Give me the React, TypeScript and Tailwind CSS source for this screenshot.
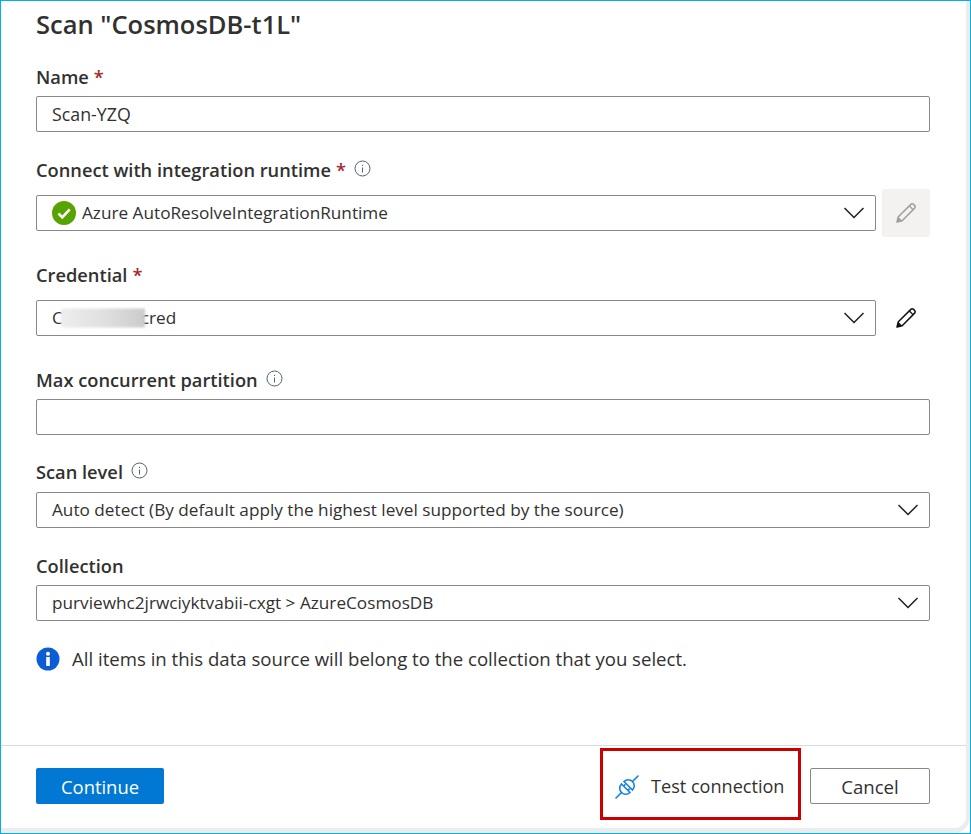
import type { ReactNode } from "react";

const font = { fontFamily: '"Open Sans", "Noto Sans", sans-serif' };

function InfoIcon() {
  return (
    <svg width="17" height="17" viewBox="0 0 17 17" fill="none" className="shrink-0">
      <circle cx="8.5" cy="8.5" r="7.5" stroke="#52606d" strokeWidth="1" />
      <rect x="8" y="7.5" width="1" height="5" fill="#52606d" />
      <rect x="8" y="4.8" width="1" height="1.2" fill="#52606d" />
    </svg>
  );
}

function Chevron() {
  return (
    <svg width="20" height="12" viewBox="0 0 20 12" fill="none" className="shrink-0">
      <path d="M0.5 1l9.500 9.500L19.500 1" stroke="#201f1e" strokeWidth="1.5" />
    </svg>
  );
}

function Pencil({ color }: { color: string }) {
  return (
    <svg width="22" height="22" viewBox="0 0 22 22" fill="none">
      <path
        d="M2 20l1.3-5.2L15.6 2.6c.9-.9 2.3-.9 3.2 0l.6.6c.9.9.9 2.3 0 3.2L7.2 18.7 2 20z"
        stroke={color}
        strokeWidth="1.5"
        strokeLinejoin="round"
      />
      <path d="M3.3 14.8l3.9 3.9L2 20l1.3-5.2z" fill={color} />
      <path d="M14.4 4l3.6 3.6" stroke={color} strokeWidth="1.3" />
    </svg>
  );
}

function Label({ text, required, info }: { text: string; required?: boolean; info?: boolean }) {
  return (
    <div className="flex h-[26px] items-center text-[18.25px] font-semibold leading-[26px] text-[#323130]">
      <span>{text}</span>
      {required && <span className="ml-[5px] text-[#a4262c]">*</span>}
      {info && (
        <span className="-mt-[4px] ml-[8px]">
          <InfoIcon />
        </span>
      )}
    </div>
  );
}

function Box({ children, select, className }: { children?: ReactNode; select?: boolean; className?: string }) {
  return (
    <div
      className={`flex h-[36px] items-center rounded-[2px] border border-[#8a8886] bg-white pl-[15px] pr-[11px] text-[17.2px] text-[#323130] ${className ?? ""}`}
    >
      <div className="flex min-w-0 flex-1 items-center">{children}</div>
      {select && <Chevron />}
    </div>
  );
}

export default function App() {
  return (
    <div
      style={font}
      className="flex h-[834px] w-[971px] flex-col overflow-hidden border border-[#00b0f0] bg-white"
    >
      <div className="flex flex-1 flex-col rounded-br-[16px] border-b-[5px] border-r-[4px] border-[#ececec]">
        <div className="flex-1 pl-[35px] pr-[36px]">
          <h1 className="h-[46px] pt-[3px] text-[25.5px] font-semibold leading-[40px] text-[#323130]">
            Scan "CosmosDB-t1L"
          </h1>

          <div className="pt-[17px]">
            <Label text="Name" required />
            <Box className="mt-[6px] text-[17.8px]">Scan-YZQ</Box>
          </div>

          <div className="pt-[25px]">
            <Label text="Connect with integration runtime" required info />
            <div className="mt-[6px] flex items-center">
              <Box select className="w-[840px]">
                <svg width="24" height="24" viewBox="0 0 24 24" className="mr-[6px] shrink-0">
                  <circle cx="12" cy="12" r="12" fill="#57a300" />
                  <path d="M6.5 12.5l3.8 3.8 7.4-8" fill="none" stroke="#fff" strokeWidth="2.6" />
                </svg>
                Azure AutoResolveIntegrationRuntime
              </Box>
              <button className="ml-[6px] flex h-[48px] w-[48px] items-center justify-center rounded-[2px] bg-[#f3f2f1]">
                <Pencil color="#a19f9d" />
              </button>
            </div>
          </div>

          <div className="pt-[25px]">
            <Label text="Credential" required />
            <div className="mt-[12px] flex items-center">
              <Box select className="w-[840px]">
                <span className="relative">
                  C<span className="inline-block w-[78px]" />cred
                  <span className="absolute left-[9px] top-1/2 h-[19px] w-[84px] -translate-y-1/2 bg-linear-to-r from-[#eeeeee] via-[#e0e0e0] to-[#cbcbcb] blur-[1px]" />
                </span>
              </Box>
              <button className="ml-[6px] flex h-[36px] w-[48px] items-center justify-center">
                <Pencil color="#111111" />
              </button>
            </div>
          </div>

          <div className="pt-[31px]">
            <Label text="Max concurrent partition" info />
            <Box className="mt-[6px]" />
          </div>

          <div className="pt-[24px]">
            <Label text="Scan level" info />
            <Box select className="mt-[7px]">
              Auto detect (By default apply the highest level supported by the source)
            </Box>
          </div>

          <div className="pt-[25px]">
            <Label text="Collection" />
            <Box select className="mt-[6px]">
              purviewhc2jrwciyktvabii-cxgt &gt; AzureCosmosDB
            </Box>
          </div>

          <div className="mt-[24px] flex items-center text-[18.6px] text-[#323130]">
            <svg width="24" height="24" viewBox="0 0 24 24" className="mr-[12px] shrink-0">
              <circle cx="12" cy="12" r="11.5" fill="#0b5cd7" />
              <rect x="10.2" y="10" width="3.6" height="9" fill="#fff" />
              <circle cx="12" cy="6.8" r="2" fill="#fff" />
            </svg>
            All items in this data source will belong to the collection that you select.
          </div>
        </div>

        <div className="flex h-[83px] shrink-0 items-start border-t border-[#d9d9d9] pl-[35px] pr-[36px]">
          <button className="mt-[22px] h-[36px] w-[128px] rounded-[2px] bg-[#0078d4] pt-[1px] text-[18.4px] text-white">
            Continue
          </button>
          <div className="flex-1" />
          <button className="mt-[2px] flex h-[72px] w-[201px] items-center border-[3px] border-[#c80000] pl-[12px] pt-[5px] text-[18.1px] text-[#323130]">
            <svg width="24" height="24" viewBox="0 0 24 24" fill="none" stroke="#1683d8" strokeWidth="1.6" className="mr-[12px] shrink-0">
              <path d="M1 23l5.500-5.500M17.500 6.500L23 1" strokeLinecap="round" />
              <path d="M9 6.500L17.500 15A6 6 0 0 0 9 6.500z" />
              <path d="M6.500 9L15 17.500A6 6 0 0 1 6.500 9z" />
              <path d="M8.600 11.100l1.800-1.800M12.900 15.400l1.800-1.800" />
            </svg>
            Test connection
          </button>
          <button className="ml-[9px] mt-[22px] h-[36px] w-[120px] rounded-[2px] border border-[#8a8886] bg-white pt-[1px] text-[18.6px] text-[#323130]">
            Cancel
          </button>
        </div>
      </div>
    </div>
  );
}
